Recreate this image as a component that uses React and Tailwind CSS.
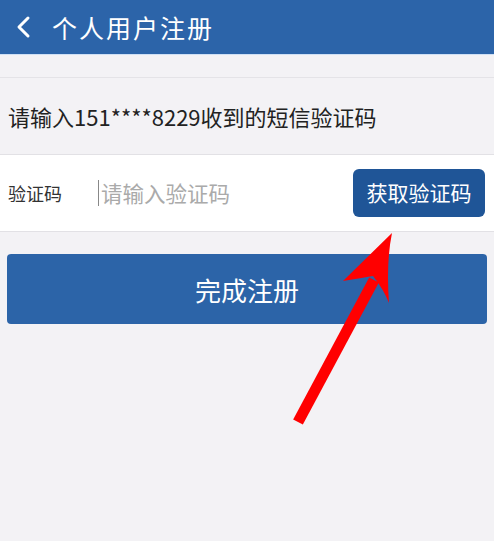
const FONT = { fontFamily: '"Noto Sans CJK SC", "Noto Sans", sans-serif' };

function BackIcon() {
  return (
    <svg width="20" height="24" viewBox="0 0 20 24" fill="none">
      <path d="M14 3 L5 12 L14 21" stroke="white" strokeWidth="3" strokeLinecap="round" strokeLinejoin="round" />
    </svg>
  );
}

function RedArrow() {
  return (
    <svg className="absolute left-0 top-0 pointer-events-none" width="494" height="541" viewBox="0 0 494 541">
      <path d="M298 422 L374 280" stroke="#f00" strokeWidth="11" strokeLinecap="butt" />
      <path d="M392 233 L343 281 Q362 278 373 276 Q384 290 389 303 Q386 262 392 233 Z" fill="#f00" />
    </svg>
  );
}

export default function App() {
  return (
    <div className="relative w-[494px] h-[541px] bg-[#f3f2f5] overflow-hidden" style={FONT}>
      <div className="flex items-center h-[55px] bg-[#2c64a9] border-b border-[#cfe0f5] pl-[14px]">
        <BackIcon />
        <span className="ml-[18px] text-[25px] text-white tracking-[2px] leading-none">个人用户注册</span>
      </div>
      <div className="h-[23px] border-b border-[#e4e3e7]" />
      <div className="flex items-center h-[77px] px-[8px] border-b border-[#e2e1e5]">
        <span className="text-[22px] text-[#222] leading-none">请输入151****8229收到的短信验证码</span>
      </div>
      <div className="flex items-center h-[77px] bg-white border-b border-[#e2e1e5] pl-[8px] pr-[9px]">
        <span className="w-[90px] text-[18px] text-[#333]">验证码</span>
        <div className="flex-1 flex items-center">
          <span className="w-px h-[26px] bg-[#888]" />
          <span className="ml-[2px] text-[21.5px] text-[#aaa]">请输入验证码</span>
        </div>
        <button className="w-[132px] h-[48px] rounded-[6px] bg-[#1f5597] text-white text-[21px]">获取验证码</button>
      </div>
      <div className="px-[7px] pt-[22px]">
        <button className="w-full h-[70px] rounded-[4px] bg-[#2c64a8] text-white text-[26px]">完成注册</button>
      </div>
      <RedArrow />
    </div>
  );
}
